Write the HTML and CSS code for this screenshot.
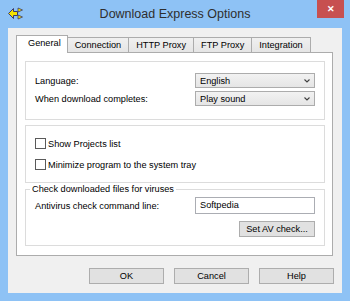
FILE: index.html
```html
<!DOCTYPE html>
<html lang="en">
  <head>
    <meta charset="UTF-8" />
    <title>Download Express Options</title>
    <link rel="stylesheet" href="styles.css">
  </head>
  <body>
    <div class="window">
      <div class="titlebar">
        <svg class="app-icon" viewBox="0 0 15 13" width="15" height="13">
          <polygon points="0.5,6.5 5.5,1.5 5.5,4.5 9.5,4.5 9.5,8.5 5.5,8.5 5.5,11.5" fill="#f5e300" stroke="#3c3a6a" stroke-width="1" />
          <polygon points="10,1 14.5,3 10,5" fill="#f5e300" stroke="#3c3a6a" stroke-width="0.8" />
          <polygon points="10,8 14.5,10 10,12" fill="#f5e300" stroke="#3c3a6a" stroke-width="0.8" />
        </svg>
        <div class="title">Download Express Options</div>
        <div class="close">✕</div>
      </div>

      <div class="client">
        <div class="tabs">
          <div class="tab active">General</div>
          <div class="tab">Connection</div>
          <div class="tab">HTTP Proxy</div>
          <div class="tab">FTP Proxy</div>
          <div class="tab">Integration</div>
        </div>

        <div class="panel">
          <div class="group settings">
            <div class="row">
              <span>Language:</span>
              <div class="combo">
                <span>English</span>
                <svg class="chevron" viewBox="0 0 6 4" width="6" height="4"><path d="M0.5 0.5 L3 3 L5.5 0.5" fill="none" stroke="#404040" stroke-width="1.1" /></svg>
              </div>
            </div>
            <div class="row">
              <span>When download completes:</span>
              <div class="combo">
                <span>Play sound</span>
                <svg class="chevron" viewBox="0 0 6 4" width="6" height="4"><path d="M0.5 0.5 L3 3 L5.5 0.5" fill="none" stroke="#404040" stroke-width="1.1" /></svg>
              </div>
            </div>
          </div>

          <div class="group checks">
            <label class="check"><span class="box"></span>Show Projects list</label>
            <label class="check"><span class="box"></span>Minimize program to the system tray</label>
          </div>

          <fieldset class="group av">
            <legend>Check downloaded files for viruses</legend>
            <div class="row">
              <span>Antivirus check command line:</span>
              <div class="textbox">Softpedia</div>
            </div>
            <div class="av-actions">
              <button class="btn btn-wide">Set AV check...</button>
            </div>
          </fieldset>
        </div>

        <div class="footer">
          <button class="btn">OK</button>
          <button class="btn">Cancel</button>
          <button class="btn">Help</button>
        </div>
      </div>
    </div>
  </body>
</html>
```

FILE: styles.css
```css
* {
  box-sizing: border-box;
}

body {
  margin: 0;
  font-family: "Liberation Sans", Arial, sans-serif;
  font-size: 9.2px;
  color: #000;
}

.window {
  width: 350px;
  height: 301px;
  background: #8ec2f5;
  display: flex;
  flex-direction: column;
}

.titlebar {
  height: 28px;
  display: grid;
  grid-template-columns: 1fr auto 1fr;
  align-items: center;
}

.app-icon {
  margin-left: 8px;
  margin-top: -1px;
}

.title {
  font-family: "Liberation Sans", Arial, sans-serif;
  font-size: 12.5px;
  color: #2e2e2e;
}

.close {
  justify-self: end;
  align-self: start;
  width: 27px;
  height: 18px;
  margin-right: 6px;
  background: #c75050;
  color: #fff;
  font-size: 9px;
  font-weight: bold;
  display: flex;
  align-items: center;
  justify-content: center;
}

.client {
  flex: 1;
  margin: 0 8px 8px;
  background: #f0f0f0;
  display: flex;
  flex-direction: column;
}

.tabs {
  height: 24px;
  display: flex;
  align-items: flex-end;
  padding-left: 8px;
}

.tab {
  height: 15px;
  line-height: 14px;
  padding: 0 7px;
  border: 1px solid #acacac;
  border-bottom: 0;
  margin-left: -1px;
  background: linear-gradient(#f0f0f0, #e5e5e5);
}

.tab.active {
  height: 18px;
  line-height: 15px;
  margin-left: 0;
  margin-bottom: -1px;
  padding: 0 6px 0 11px;
  background: #fff;
  position: relative;
  z-index: 1;
}

.panel {
  height: 204px;
  margin: 0 9px 0 8px;
  background: #fff;
  border: 1px solid #acacac;
  padding: 8px 7px 0 8px;
  display: flex;
  flex-direction: column;
}

.group {
  border: 1px solid #dcdcdc;
}

.settings {
  height: 59px;
  padding: 11px 9px 0;
  display: flex;
  flex-direction: column;
  gap: 3px;
}

.row {
  display: flex;
  justify-content: space-between;
  align-items: center;
}

.combo {
  width: 120px;
  height: 15px;
  border: 1px solid #acacac;
  background: linear-gradient(#f2f2f2, #e5e5e5);
  display: flex;
  align-items: center;
  justify-content: space-between;
  padding: 0 4px;
}

.checks {
  height: 58px;
  margin-top: 5px;
  padding: 12px 9px 0;
  display: flex;
  flex-direction: column;
  gap: 10px;
}

.check {
  display: flex;
  align-items: center;
  height: 11px;
}

.box {
  width: 11px;
  height: 11px;
  border: 1px solid #5a5a5a;
  background: #fff;
  margin-right: 2px;
}

.av {
  margin: 1px 0 0;
  padding: 2px 9px 8px;
  min-width: 0;
}

.av legend {
  margin-left: -5px;
  padding: 0 2px;
  line-height: 11px;
}

.textbox {
  width: 120px;
  height: 17px;
  border: 1px solid #abadb3;
  background: #fff;
  padding-left: 4px;
  line-height: 15px;
}

.av-actions {
  display: flex;
  justify-content: flex-end;
  margin-top: 7px;
}

.btn {
  width: 75px;
  height: 16px;
  padding: 0;
  border: 1px solid #adadad;
  background: #e1e1e1;
  font: inherit;
  color: #000;
}

.btn-wide {
  width: 76px;
}

.footer {
  display: flex;
  justify-content: flex-end;
  gap: 10px;
  padding: 12px 8px 0 0;
}
```
